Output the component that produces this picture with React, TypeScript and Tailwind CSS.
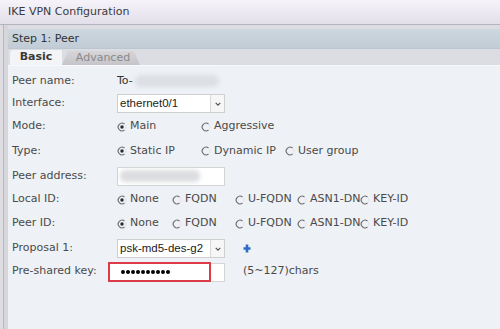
import React from "react";

const font = { fontFamily: '"DejaVu Sans", Verdana, sans-serif' };

function Radio({ checked }: { checked?: boolean }) {
  return (
    <svg width="10" height="10" viewBox="0 0 10 10" className="shrink-0">
      <path d="M7.6 2.2 A3.8 3.8 0 1 0 7.6 7.8" fill="none" stroke="#6a6a6a" strokeWidth="1.1" />
      <path d="M7.6 2.2 A3.8 3.8 0 0 1 7.6 7.8" fill="none" stroke="#e4e4e4" strokeWidth="1" />
      {checked && <circle cx="5" cy="5" r="1.7" fill="#2a2a2a" />}
    </svg>
  );
}

function Opt({ label, checked, w }: { label: string; checked?: boolean; w: string }) {
  return (
    <div className={`flex shrink-0 items-center gap-[3px] whitespace-nowrap ${w}`}>
      <Radio checked={checked} />
      <span>{label}</span>
    </div>
  );
}

function Chevron() {
  return (
    <svg width="6" height="4" viewBox="0 0 6 4">
      <path d="M0.7 0.8 L3 3.1 L5.3 0.8" fill="none" stroke="#555" strokeWidth="1.2" />
    </svg>
  );
}

function Select({ value }: { value: string }) {
  return (
    <div className="flex h-[19px] w-[108px] border border-[#cfcfcf] bg-white">
      <div className="flex flex-1 items-center pl-[2px] text-[#222]" style={{ fontFamily: '"Liberation Sans", Arial, sans-serif', fontSize: "11.5px" }}>
        {value}
      </div>
      <div className="flex w-[14px] items-center justify-center border-l border-[#d8d8d8] bg-[#f6f6f6]">
        <Chevron />
      </div>
    </div>
  );
}

function Row({ label, h, children }: { label: string; h: string; children?: React.ReactNode }) {
  return (
    <div className={`flex items-center whitespace-nowrap ${h}`}>
      <div className="w-[105px] shrink-0">{label}</div>
      {children}
    </div>
  );
}

export default function App() {
  const dots = Array.from({ length: 10 });
  return (
    <div className="relative h-[329px] w-[500px] overflow-hidden bg-[#eef1f5] text-[11px] text-[#4a4a4a]" style={font}>
      {/* title bar */}
      <div className="flex h-[25px] items-center border-b border-[#b4b4bc] bg-gradient-to-b from-[#f6f3fa] to-[#e3dfea] pl-[8px] pt-[1px] text-[11px] text-[#3a3a3a]">
        IKE VPN Configuration
      </div>
      <div className="flex h-[304px]">
        {/* left strip */}
        <div className="flex w-[8px] shrink-0">
          <div className="w-[3px] bg-[#dedee2]" />
          <div className="w-[1px] bg-[#b9b9bd]" />
          <div className="w-[4px] bg-[#d6d6db]" />
        </div>
        <div className="flex flex-1 flex-col">
          <div className="h-[4px] bg-[#dcdce2]" />
          {/* step header */}
          <div className="flex h-[20px] items-center border-b border-[#bcc6d0] bg-gradient-to-b from-[#cdd7df] to-[#c1ccd6] pl-[4px] pt-[1px] text-[#333]">
            Step 1: Peer
          </div>
          {/* tabs */}
          <div className="flex h-[16px] items-end bg-[#dcdce3] pl-[2px]">
            <div className="flex h-[15px] w-[52px] items-center justify-center rounded-tl-[3px] bg-[#f2f4f7] font-bold text-[#3a3a3a]">
              Basic
            </div>
            <div
              className="flex h-[14px] w-[78px] items-center justify-center bg-gradient-to-b from-[#d6d6da] to-[#c4c4ca] pl-[4px] text-[#8a8a8a]"
              style={{ clipPath: "polygon(6px 0, 72px 0, 78px 100%, 0 100%)" }}
            >
              Advanced
            </div>
          </div>
          <div className="h-[1px] bg-[#f8f9fb]" />
          {/* form */}
          <div className="flex flex-col pl-[4px] pt-[4px]">
            <Row label="Peer name:" h="h-[22px]">
              <span className="text-[#333]">To-</span>
              <div className="ml-[2px] h-[12px] w-[84px] rounded-[6px] bg-[#dcdfe4] blur-[2px]" />
            </Row>
            <Row label="Interface:" h="h-[23px]">
              <Select value="ethernet0/1" />
            </Row>
            <Row label="Mode:" h="h-[23px]">
              <Opt label="Main" checked w="w-[84px]" />
              <Opt label="Aggressive" w="w-[84px]" />
            </Row>
            <Row label="Type:" h="h-[26px]">
              <Opt label="Static IP" checked w="w-[84px]" />
              <Opt label="Dynamic IP" w="w-[84px]" />
              <Opt label="User group" w="w-[90px]" />
            </Row>
            <Row label="Peer address:" h="h-[24px]">
              <div className="flex h-[19px] w-[108px] items-center border border-[#d4d4d4] bg-white pl-[2px]">
                <div className="h-[12px] w-[80px] rounded-[5px] bg-[#dcdde0] blur-[2px]" />
              </div>
            </Row>
            <Row label="Local ID:" h="h-[23px]">
              <Opt label="None" checked w="w-[55px]" />
              <Opt label="FQDN" w="w-[63px]" />
              <Opt label="U-FQDN" w="w-[62px]" />
              <Opt label="ASN1-DN" w="w-[63px]" />
              <Opt label="KEY-ID" w="w-[60px]" />
            </Row>
            <Row label="Peer ID:" h="h-[25px]">
              <Opt label="None" checked w="w-[55px]" />
              <Opt label="FQDN" w="w-[63px]" />
              <Opt label="U-FQDN" w="w-[62px]" />
              <Opt label="ASN1-DN" w="w-[63px]" />
              <Opt label="KEY-ID" w="w-[60px]" />
            </Row>
            <Row label="Proposal 1:" h="h-[25px]">
              <Select value="psk-md5-des-g2" />
              <svg width="8" height="9" viewBox="0 0 8 9" className="ml-[18px]">
                <path d="M4 0.5 V8.5 M0.5 4.5 H7.5" stroke="#2c6cc4" strokeWidth="2.6" />
              </svg>
            </Row>
            <Row label="Pre-shared key:" h="h-[21px]">
              <div className="relative -ml-[9px] flex h-[20px] w-[118px] items-center">
                <div className="absolute left-[9px] top-[1px] h-[19px] w-[108px] border border-[#d4d4d4] bg-white" />
                <div className="relative flex h-[20px] w-[103px] items-center gap-[1px] border-2 border-[#dd3b47] bg-white pl-[11px]">
                  {dots.map((_, i) => (
                    <span key={i} className="block h-[4px] w-[4px] rounded-full bg-black" />
                  ))}
                </div>
              </div>
              <span className="ml-[17px]">(5~127)chars</span>
            </Row>
          </div>
        </div>
      </div>
    </div>
  );
}
